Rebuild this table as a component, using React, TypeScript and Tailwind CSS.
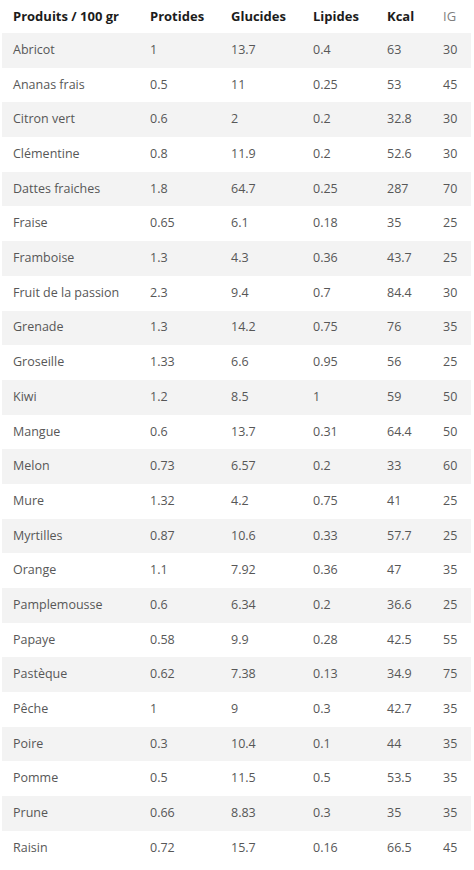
import React from "react";

const rows: [string, string, string, string, string, string][] = [
  ["Abricot", "1", "13.7", "0.4", "63", "30"],
  ["Ananas frais", "0.5", "11", "0.25", "53", "45"],
  ["Citron vert", "0.6", "2", "0.2", "32.8", "30"],
  ["Clémentine", "0.8", "11.9", "0.2", "52.6", "30"],
  ["Dattes fraiches", "1.8", "64.7", "0.25", "287", "70"],
  ["Fraise", "0.65", "6.1", "0.18", "35", "25"],
  ["Framboise", "1.3", "4.3", "0.36", "43.7", "25"],
  ["Fruit de la passion", "2.3", "9.4", "0.7", "84.4", "30"],
  ["Grenade", "1.3", "14.2", "0.75", "76", "35"],
  ["Groseille", "1.33", "6.6", "0.95", "56", "25"],
  ["Kiwi", "1.2", "8.5", "1", "59", "50"],
  ["Mangue", "0.6", "13.7", "0.31", "64.4", "50"],
  ["Melon", "0.73", "6.57", "0.2", "33", "60"],
  ["Mure", "1.32", "4.2", "0.75", "41", "25"],
  ["Myrtilles", "0.87", "10.6", "0.33", "57.7", "25"],
  ["Orange", "1.1", "7.92", "0.36", "47", "35"],
  ["Pamplemousse", "0.6", "6.34", "0.2", "36.6", "25"],
  ["Papaye", "0.58", "9.9", "0.28", "42.5", "55"],
  ["Pastèque", "0.62", "7.38", "0.13", "34.9", "75"],
  ["Pêche", "1", "9", "0.3", "42.7", "35"],
  ["Poire", "0.3", "10.4", "0.1", "44", "35"],
  ["Pomme", "0.5", "11.5", "0.5", "53.5", "35"],
  ["Prune", "0.66", "8.83", "0.3", "35", "35"],
  ["Raisin", "0.72", "15.7", "0.16", "66.5", "45"],
];

const grid = "grid grid-cols-[137px_81px_82px_74px_56px_39px]";

export default function App() {
  return (
    <div className="w-[474px] h-[870px] bg-white overflow-hidden" style={{ fontFamily: '"Open Sans", "Liberation Sans", sans-serif' }}>
      <div className="ml-[2px] w-[469px]">
        <div className={`${grid} h-[33px] items-center text-[13px] font-bold text-[#1c1c1c]`}>
          <div className="pl-[11px]">Produits / 100 gr</div>
          <div className="pl-[11px]">Protides</div>
          <div className="pl-[11px]">Glucides</div>
          <div className="pl-[11px]">Lipides</div>
          <div className="pl-[11px]">Kcal</div>
          <div className="pl-[11px] font-normal text-[#808080]">IG</div>
        </div>
        {rows.map((r, i) => (
          <div
            key={r[0]}
            className={`${grid} h-[34.7px] items-center text-[12.5px] text-[#575757] ${i % 2 === 0 ? "bg-[#f3f3f3]" : "bg-white"}`}
          >
            {r.map((c, j) => (
              <div key={j} className="pl-[11px] whitespace-nowrap">
                {c}
              </div>
            ))}
          </div>
        ))}
      </div>
    </div>
  );
}
